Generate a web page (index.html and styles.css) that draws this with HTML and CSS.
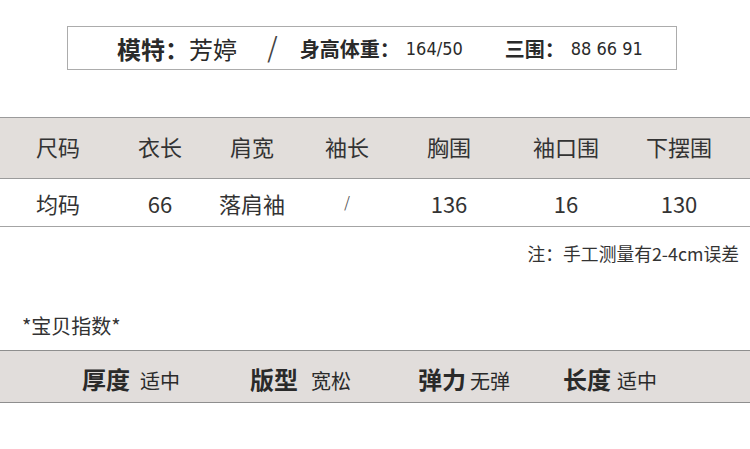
FILE: index.html
```html
<!DOCTYPE html>
<html lang="zh-CN">
<head>
<meta charset="utf-8">
<title>尺码表</title>
<link rel="stylesheet" href="styles.css">
</head>
<body>
<div class="page">
  <div class="model-box">
    <span class="m-label">模特：</span><span class="m-name">芳婷</span>
    <span class="m-slash">/</span>
    <span class="m-key">身高体重：</span><span class="m-num">164/50</span>
    <span class="m-key m-gap">三围：</span><span class="m-num">88 66 91</span>
  </div>

  <div class="size-table">
    <div class="row head">
      <div class="cell">尺码</div>
      <div class="cell">衣长</div>
      <div class="cell">肩宽</div>
      <div class="cell">袖长</div>
      <div class="cell">胸围</div>
      <div class="cell">袖口围</div>
      <div class="cell">下摆围</div>
    </div>
    <div class="row body">
      <div class="cell">均码</div>
      <div class="cell">66</div>
      <div class="cell">落肩袖</div>
      <div class="cell thin">/</div>
      <div class="cell">136</div>
      <div class="cell">16</div>
      <div class="cell">130</div>
    </div>
  </div>

  <div class="note">注：手工测量有2-4cm误差</div>

  <div class="index-title">*宝贝指数*</div>

  <div class="index-band">
    <div class="idx"><b>厚度</b><span class="v sp">适中</span></div>
    <div class="idx"><b>版型</b><span class="v sp2">宽松</span></div>
    <div class="idx"><b>弹力</b><span class="v">无弹</span></div>
    <div class="idx"><b>长度</b><span class="v sp3">适中</span></div>
  </div>
</div>
</body>
</html>
```

FILE: styles.css
```css
* { box-sizing: border-box; }
html, body { margin: 0; padding: 0; background: #fff; }
body {
  width: 750px;
  height: 449px;
  overflow: hidden;
  font-family: "Noto Sans CJK SC", "Noto Sans", sans-serif;
  color: #333;
}
.page { position: relative; }

.model-box {
  margin: 26px 0 0 67px;
  width: 610px;
  height: 44px;
  border: 1px solid #acacac;
  display: flex;
  align-items: center;
  padding-left: 49px;
  color: #2a2a2a;
  white-space: nowrap;
}
.m-label { font-size: 24px; font-weight: 700; }
.m-name { font-size: 24px; font-weight: 400; }
.m-slash {
  font-family: "DejaVu Sans", sans-serif;
  font-size: 32px;
  font-weight: 200;
  color: #444;
  margin: 0 22px 0 30px;
  line-height: 1;
}
.m-key { font-size: 20px; font-weight: 700; }
.m-gap { margin-left: 42px; }
.m-num {
  font-family: "DejaVu Sans Condensed", "DejaVu Sans", sans-serif;
  font-stretch: condensed;
  font-size: 18px;
  font-weight: 400;
  margin-left: 6px;
}

.size-table { margin-top: 47px; }
.row {
  display: grid;
  grid-template-columns: 116px 88px 96px 94px 110px 124px 102px;
  align-items: center;
}
.row .cell { text-align: center; font-size: 22px; color: #333; }
.head {
  height: 62px;
  background: #e2dedb;
  border-top: 1px solid #9b9b9b;
  border-bottom: 1px solid #9b9b9b;
  padding-bottom: 4px;
}
.body {
  height: 48px;
  border-bottom: 1px solid #a4a4a4;
}
.cell.thin { font-family: "DejaVu Sans", sans-serif; font-weight: 300; font-size: 18px; color: #555; }

.note {
  text-align: right;
  padding-right: 11px;
  font-size: 17.8px;
  color: #333;
  margin-top: 15px;
  line-height: 22px;
}

.index-title {
  margin-top: 51px;
  padding-left: 22px;
  font-size: 20px;
  line-height: 22px;
  color: #333;
}

.index-band {
  margin-top: 13px;
  height: 53px;
  background: #e1dddb;
  border-top: 1px solid #8e8e8e;
  border-bottom: 1px solid #8e8e8e;
  display: grid;
  grid-template-columns: 168px 168px 145px auto;
  padding-left: 82px;
  padding-top: 4px;
  align-items: center;
  color: #2a2a2a;
}
.idx { white-space: nowrap; display: flex; align-items: baseline; }
.idx b { font-size: 24px; font-weight: 700; }
.idx .v { font-size: 20px; font-weight: 400; margin-left: 4px; }
.idx .v.sp { margin-left: 10px; }
.idx .v.sp2 { margin-left: 13px; }
.idx .v.sp3 { margin-left: 6px; }
```
